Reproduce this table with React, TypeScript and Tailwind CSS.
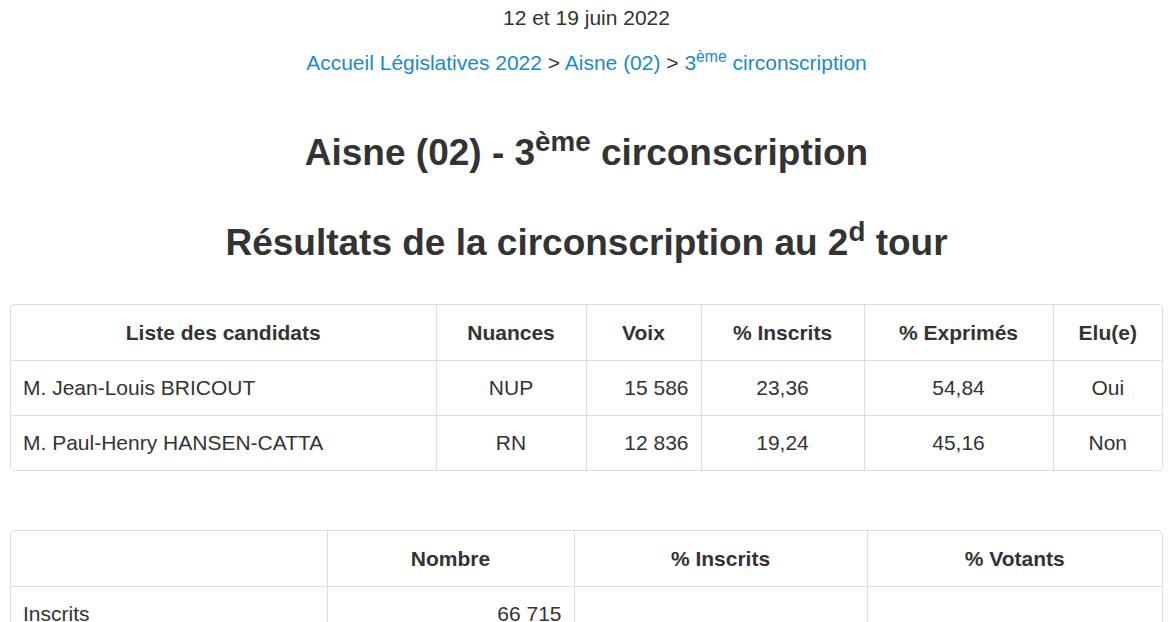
import React from 'react';

type Candidat = {
  nom: string;
  nuance: string;
  voix: string;
  inscrits: string;
  exprimes: string;
  elu: string;
};

const candidats: Candidat[] = [
  { nom: 'M. Jean-Louis BRICOUT', nuance: 'NUP', voix: '15 586', inscrits: '23,36', exprimes: '54,84', elu: 'Oui' },
  { nom: 'M. Paul-Henry HANSEN-CATTA', nuance: 'RN', voix: '12 836', inscrits: '19,24', exprimes: '45,16', elu: 'Non' },
];

const th = 'h-[55px] px-3 font-bold text-center border-[#dddddd]';
const td = 'h-[55px] px-3 border-t border-[#dddddd]';

export default function App() {
  return (
    <main className="min-h-screen bg-white text-[#333333] font-['Liberation_Sans',Arial,sans-serif] text-[21px] leading-[1.42857]">
      <div className="pl-[10px] pr-[7px] pt-[3px]">
        <p className="text-center">12 et 19 juin 2022</p>

        <nav className="mt-[15px] text-center">
          <a href="#" className="text-[#1a8bc6]">Accueil Législatives 2022</a>
          <span> &gt; </span>
          <a href="#" className="text-[#1a8bc6]">Aisne (02)</a>
          <span> &gt; </span>
          <a href="#" className="text-[#1a8bc6]">
            3<sup>ème</sup> circonscription
          </a>
        </nav>

        <h1 className="mt-[55px] text-center text-[37px] font-bold leading-[1.1]">
          Aisne (02) - 3<sup>ème</sup> circonscription
        </h1>

        <h2 className="mt-[49px] text-center text-[37px] font-bold leading-[1.1]">
          Résultats de la circonscription au 2<sup>d</sup> tour
        </h2>

        {/* candidats */}
        <div className="mt-[41px] border border-[#dddddd] rounded-[5px] overflow-hidden">
          <table className="w-full table-fixed border-collapse">
            <colgroup>
              <col className="w-[425px]" />
              <col className="w-[150px]" />
              <col className="w-[115px]" />
              <col className="w-[163px]" />
              <col className="w-[189px]" />
              <col />
            </colgroup>
            <thead>
              <tr>
                <th className={th}>Liste des candidats</th>
                <th className={`${th} border-l`}>Nuances</th>
                <th className={`${th} border-l`}>Voix</th>
                <th className={`${th} border-l`}>% Inscrits</th>
                <th className={`${th} border-l`}>% Exprimés</th>
                <th className={`${th} border-l`}>Elu(e)</th>
              </tr>
            </thead>
            <tbody>
              {candidats.map((c) => (
                <tr key={c.nom}>
                  <td className={`${td} text-left`}>{c.nom}</td>
                  <td className={`${td} border-l text-center`}>{c.nuance}</td>
                  <td className={`${td} border-l text-right`}>{c.voix}</td>
                  <td className={`${td} border-l text-center`}>{c.inscrits}</td>
                  <td className={`${td} border-l text-center`}>{c.exprimes}</td>
                  <td className={`${td} border-l text-center`}>{c.elu}</td>
                </tr>
              ))}
            </tbody>
          </table>
        </div>

        {/* participation */}
        <div className="mt-[59px] border border-[#dddddd] rounded-[5px] overflow-hidden">
          <table className="w-full table-fixed border-collapse">
            <colgroup>
              <col className="w-[316px]" />
              <col className="w-[247px]" />
              <col className="w-[293px]" />
              <col />
            </colgroup>
            <thead>
              <tr>
                <th className={th}></th>
                <th className={`${th} border-l`}>Nombre</th>
                <th className={`${th} border-l`}>% Inscrits</th>
                <th className={`${th} border-l`}>% Votants</th>
              </tr>
            </thead>
            <tbody>
              <tr>
                <td className={`${td} text-left`}>Inscrits</td>
                <td className={`${td} border-l text-right`}>66 715</td>
                <td className={`${td} border-l`}></td>
                <td className={`${td} border-l`}></td>
              </tr>
            </tbody>
          </table>
        </div>
      </div>
    </main>
  );
}
